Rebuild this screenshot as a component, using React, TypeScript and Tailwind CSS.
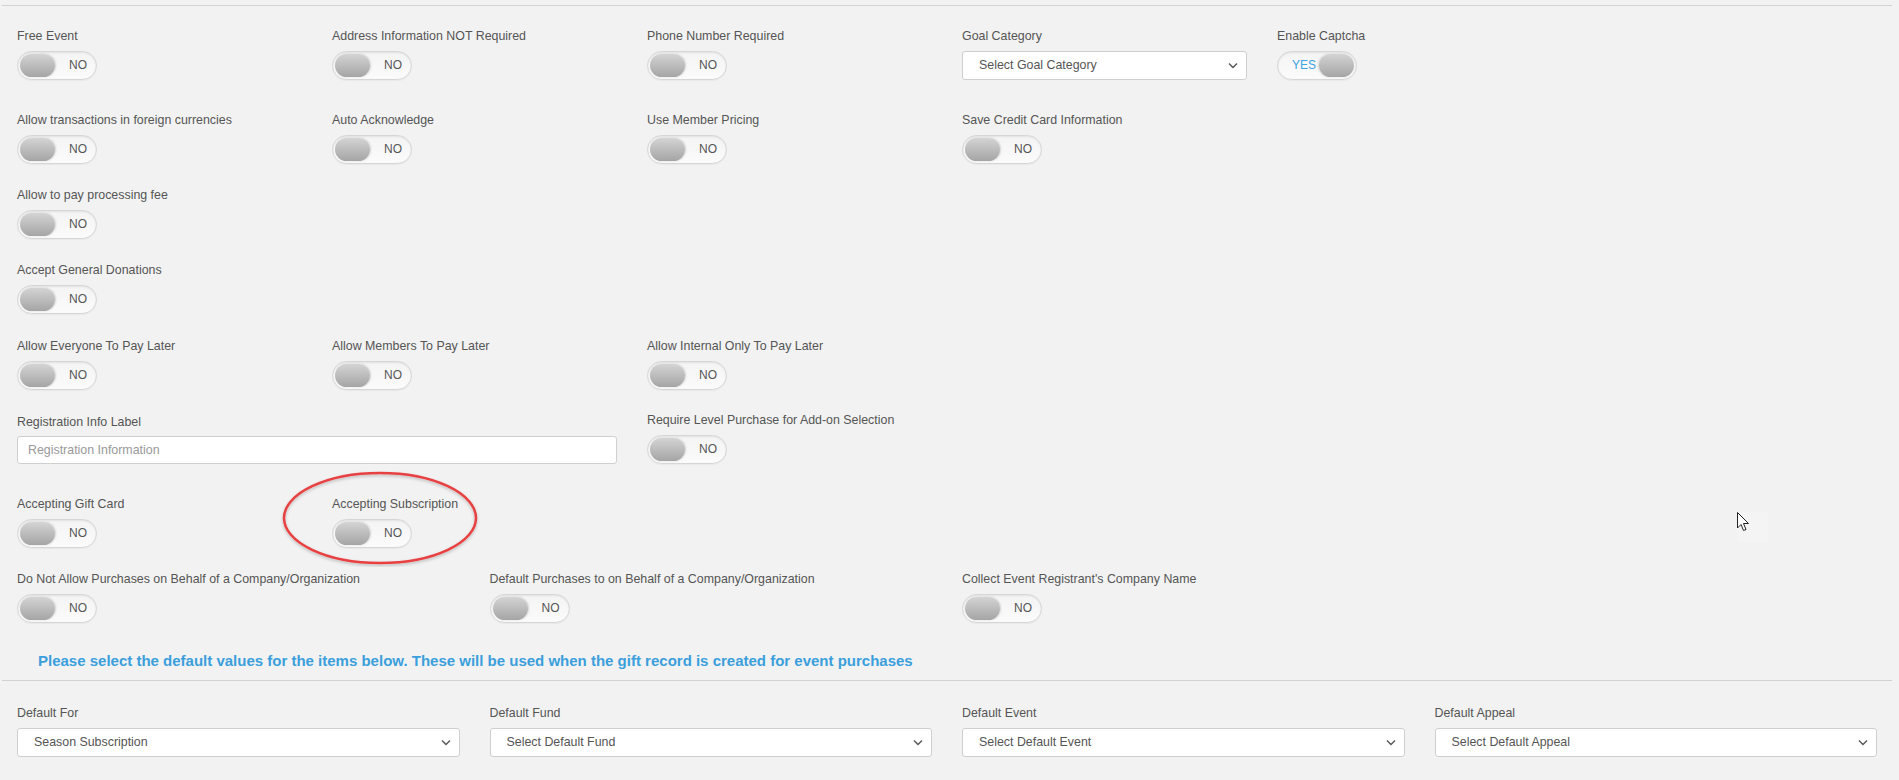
import { ReactNode } from 'react'

function Toggle({ on = false }: { on?: boolean }) {
  return (
    <div className="relative w-[80px] h-[29px] rounded-full border border-[#d6d6d6] bg-gradient-to-b from-[#f4f4f4] to-[#fbfbfb] shadow-[inset_0_1px_2px_rgba(0,0,0,0.08),0_1px_1px_rgba(0,0,0,0.04)]">
      {on ? (
        <>
          <span className="absolute left-[14px] top-[6px] text-[12px] leading-[15px] text-[#3ea3e3]">YES</span>
          <span className="absolute right-[2px] top-[2px] w-[35px] h-[23px] rounded-full bg-gradient-to-b from-[#d4d4d4] to-[#a5a5a5] shadow-[-1px_0_2px_rgba(0,0,0,0.15)]" />
        </>
      ) : (
        <>
          <span className="absolute left-[2px] top-[2px] w-[35px] h-[23px] rounded-full bg-gradient-to-b from-[#d4d4d4] to-[#a5a5a5] shadow-[1px_0_2px_rgba(0,0,0,0.15)]" />
          <span className="absolute left-[51px] top-[6px] text-[12px] leading-[15px] text-[#555]">NO</span>
        </>
      )}
    </div>
  )
}

function Select({ value }: { value: string }) {
  return (
    <div className="flex items-center justify-between h-[29px] bg-white border border-[#cfcfcf] rounded-[3px] pl-[16px] pr-[8px] text-[12.4px] text-[#555]">
      <span>{value}</span>
      <svg width="10" height="7" viewBox="0 0 10 7" fill="none">
        <path d="M1 1.5 L5 5.5 L9 1.5" stroke="#555" strokeWidth="1.4" />
      </svg>
    </div>
  )
}

function Field({ label, children, span = 'col-span-2' }: { label: string; children: ReactNode; span?: string }) {
  return (
    <div className={`${span} px-[15px]`}>
      <label className="block text-[12.4px] leading-[20px] mb-[5px] text-[#555]">{label}</label>
      {children}
    </div>
  )
}

export default function App() {
  return (
    <div className="relative w-[1899px] h-[780px] overflow-hidden bg-[#f2f2f2] font-['Liberation_Sans',Arial,sans-serif]">
      <div className="ml-[2px] w-[1890px] mt-[5px] border-t border-[#d2d2d2]" />

      <div className="ml-[2px] w-[1890px]">
        {/* Row 1 */}
        <div className="grid grid-cols-12 pt-[20px] h-[104px]">
          <Field label="Free Event"><Toggle /></Field>
          <Field label="Address Information NOT Required"><Toggle /></Field>
          <Field label="Phone Number Required"><Toggle /></Field>
          <Field label="Goal Category"><div className="mt-[1px]"><Select value="Select Goal Category" /></div></Field>
          <Field label="Enable Captcha"><Toggle on /></Field>
        </div>

        <div className="grid grid-cols-12 h-[75px]">
          <Field label="Allow transactions in foreign currencies"><Toggle /></Field>
          <Field label="Auto Acknowledge"><Toggle /></Field>
          <Field label="Use Member Pricing"><Toggle /></Field>
          <Field label="Save Credit Card Information"><Toggle /></Field>
        </div>

        <div className="grid grid-cols-12 h-[75px]">
          <Field label="Allow to pay processing fee"><Toggle /></Field>
        </div>

        <div className="grid grid-cols-12 h-[76px]">
          <Field label="Accept General Donations"><Toggle /></Field>
        </div>

        <div className="grid grid-cols-12 h-[76px]">
          <Field label="Allow Everyone To Pay Later"><Toggle /></Field>
          <Field label="Allow Members To Pay Later"><Toggle /></Field>
          <Field label="Allow Internal Only To Pay Later"><Toggle /></Field>
        </div>

        <div className="grid grid-cols-12 h-[82px]">
          <div className="col-span-4 px-[15px]">
            <label className="block text-[12.4px] leading-[20px] mb-[4px] text-[#555]">Registration Info Label</label>
            <div className="h-[28px] bg-white border border-[#cfcfcf] rounded-[3px] px-[10px] flex items-center text-[12.4px] text-[#999]">
              Registration Information
            </div>
          </div>
          <div className="col-span-2 px-[15px] -mt-[2px]">
            <label className="block text-[12.4px] leading-[20px] mb-[5px] text-[#555]">Require Level Purchase for Add-on Selection</label>
            <Toggle />
          </div>
        </div>

        <div className="grid grid-cols-12 h-[75px]">
          <Field label="Accepting Gift Card"><div className="mt-[1px]"><Toggle /></div></Field>
          <Field label="Accepting Subscription"><div className="mt-[1px]"><Toggle /></div></Field>
        </div>

        <div className="grid grid-cols-12 h-[82px]">
          <Field label="Do Not Allow Purchases on Behalf of a Company/Organization" span="col-span-3"><Toggle /></Field>
          <Field label="Default Purchases to on Behalf of a Company/Organization" span="col-span-3"><Toggle /></Field>
          <Field label="Collect Event Registrant's Company Name"><Toggle /></Field>
        </div>

        <p className="pl-[36px] text-[15px] leading-[20px] font-bold text-[#3a9fdc]">
          Please select the default values for the items below. These will be used when the gift record is created for event purchases
        </p>

        <div className="mt-[9px] border-t border-[#d2d2d2]" />

        <div className="grid grid-cols-12 pt-[22px]">
          <Field label="Default For" span="col-span-3"><Select value="Season Subscription" /></Field>
          <Field label="Default Fund" span="col-span-3"><Select value="Select Default Fund" /></Field>
          <Field label="Default Event" span="col-span-3"><Select value="Select Default Event" /></Field>
          <Field label="Default Appeal" span="col-span-3"><Select value="Select Default Appeal" /></Field>
        </div>
      </div>

      {/* annotation ellipse */}
      <svg className="absolute left-[280px] top-[469px] pointer-events-none" width="200" height="98" viewBox="0 0 200 98">
        <defs>
          <filter id="sh" x="-10%" y="-10%" width="120%" height="130%">
            <feDropShadow dx="0" dy="1.5" stdDeviation="1.5" floodColor="#000" floodOpacity="0.25" />
          </filter>
        </defs>
        <ellipse cx="100" cy="49" rx="96" ry="45" fill="none" stroke="#e84040" strokeWidth="2.5" filter="url(#sh)" />
      </svg>

      {/* mouse cursor */}
      <div className="absolute left-[1737px] top-[512px] w-[31px] h-[30px] bg-[#f4f4f4]" />
      <svg className="absolute left-[1737px] top-[512px]" width="13" height="20" viewBox="0 0 13 20">
        <path d="M0.5 0.5 L0.5 16 L4 12.5 L6.5 18.5 L9 17.5 L6.5 11.5 L11.5 11.5 Z" fill="#fff" stroke="#222" strokeWidth="1" strokeLinejoin="miter" />
      </svg>
    </div>
  )
}
